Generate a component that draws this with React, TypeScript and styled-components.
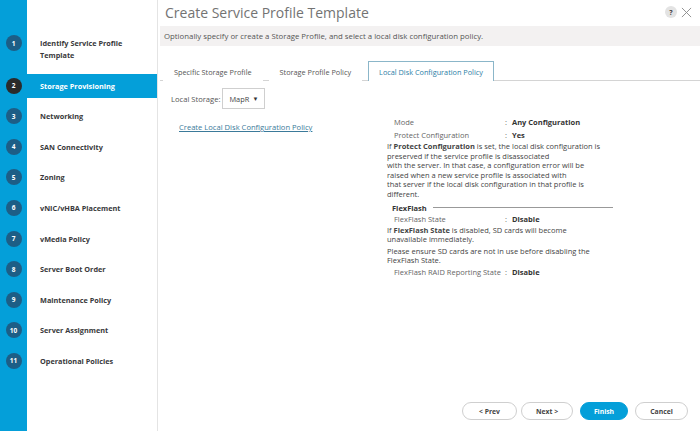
import React from 'react'
import styled, { createGlobalStyle } from 'styled-components'

const GlobalStyle = createGlobalStyle`
  html, body {
    margin: 0;
    padding: 0;
    background: #fff;
    font-family: 'Open Sans', 'Liberation Sans', sans-serif;
  }
  * { box-sizing: border-box; }
`

const CISCO_BLUE = '#049fd9'

const steps = [
  'Identify Service Profile Template',
  'Storage Provisioning',
  'Networking',
  'SAN Connectivity',
  'Zoning',
  'vNIC/vHBA Placement',
  'vMedia Policy',
  'Server Boot Order',
  'Maintenance Policy',
  'Server Assignment',
  'Operational Policies',
]

const Shell = styled.div`
  display: flex;
  width: 700px;
  height: 431px;
  overflow: hidden;
`

const Sidebar = styled.nav`
  width: 158px;
  flex-shrink: 0;
  background: linear-gradient(to right, ${CISCO_BLUE} 27px, #fff 27px);
  border-right: 1px solid #e4e4e4;
  padding-top: 31px;
  display: flex;
  flex-direction: column;
  gap: 6.6px;
`

const StepRow = styled.div<{ $active?: boolean }>`
  display: flex;
  align-items: flex-start;
  padding: 3.5px 0;
  background: ${(p) => (p.$active ? CISCO_BLUE : 'transparent')};
`

const StepRail = styled.div`
  width: 27px;
  flex-shrink: 0;
  display: flex;
  justify-content: center;
`

const StepBadge = styled.span<{ $active?: boolean }>`
  width: 16px;
  height: 16px;
  margin-top: 0.5px;
  border-radius: 50%;
  background: ${(p) => (p.$active ? '#2a2a2a' : '#1d5e86')};
  color: #fff;
  font-size: 6.5px;
  font-weight: 700;
  display: flex;
  align-items: center;
  justify-content: center;
`

const StepLabel = styled.span<{ $active?: boolean }>`
  margin-left: 13px;
  padding: 2.5px 0;
  width: 110px;
  font-size: 7.3px;
  line-height: 12px;
  font-weight: 700;
  color: ${(p) => (p.$active ? '#fff' : '#39393b')};
`

const Main = styled.main`
  flex: 1;
  display: flex;
  flex-direction: column;
  padding-left: 2px;
  min-width: 0;
`

const Header = styled.header`
  height: 24px;
  display: flex;
  align-items: center;
  padding: 0 8px 0 5px;
`

const Title = styled.h1`
  margin: 0;
  flex: 1;
  font-size: 14px;
  font-weight: 400;
  color: #737373;
`

const HelpIcon = styled.span`
  width: 12px;
  height: 12px;
  border-radius: 50%;
  background: #e3e3e3;
  color: #444;
  font-size: 7px;
  font-weight: 700;
  display: flex;
  align-items: center;
  justify-content: center;
  margin-right: 4px;
`

const CloseIcon = styled.svg`
  width: 11px;
  height: 11px;
`

const InfoBar = styled.div`
  height: 20px;
  margin-top: 2px;
  background: #f3f1f1;
  display: flex;
  align-items: center;
  padding-left: 4px;
  font-size: 7.8px;
  color: #555;
`

const TabBar = styled.div`
  margin-top: 15px;
  height: 20px;
  display: flex;
  align-items: stretch;
  gap: 6px;
  padding-left: 3px;
  border-bottom: 1px solid #d4d4d4;
`

const Tab = styled.div<{ $active?: boolean }>`
  display: flex;
  align-items: center;
  padding: 0 10px;
  font-size: 7.3px;
  color: ${(p) => (p.$active ? '#2c7ea6' : '#555')};
  border: 1px solid ${(p) => (p.$active ? '#8bb6c9' : 'transparent')};
  border-bottom: none;
  background: #fff;
  margin-bottom: -1px;
`

const FormRow = styled.div`
  display: flex;
  align-items: center;
  padding: 7px 0 0 11px;
  font-size: 7.6px;
  color: #555;
`

const Select = styled.div`
  margin-left: 2px;
  width: 43px;
  height: 21px;
  border: 1px solid #cfcfcf;
  display: flex;
  align-items: center;
  justify-content: space-between;
  padding: 0 6px;
  color: #444;
  font-size: 7.4px;
`

const Caret = styled.span`
  font-size: 6px;
  color: #333;
`

const Content = styled.div`
  display: grid;
  grid-template-columns: 208px 226px;
  padding: 6px 0 0 19px;
`

const LinkText = styled.a`
  margin-top: 7px;
  font-size: 7.6px;
  color: #3b7a9a;
  text-decoration: underline;
  align-self: start;
`

const Details = styled.div`
  display: flex;
  flex-direction: column;
  font-size: 7.5px;
  color: #444;
`

const PropRow = styled.div`
  display: grid;
  grid-template-columns: 111px 7px 1fr;
  padding-left: 7px;
  height: 13px;
  align-items: center;
  color: #666;
`

const PropValue = styled.span`
  font-weight: 700;
  color: #333;
`

const Note = styled.p<{ $gap?: number }>`
  margin: ${(p) => p.$gap ?? 0}px 0 0;
  line-height: 9.6px;
  color: #444;
`

const SectionHead = styled.div`
  display: flex;
  align-items: center;
  gap: 6px;
  margin-top: 3px;
  padding-left: 5px;
  height: 10px;
  font-weight: 700;
  color: #333;
  &::after {
    content: '';
    flex: 1;
    border-top: 1px solid #999;
  }
`

const Footer = styled.div`
  margin-top: auto;
  display: flex;
  justify-content: flex-end;
  gap: 4px;
  padding: 0 12px 11px 0;
`

const Button = styled.button<{ $primary?: boolean; $w: number }>`
  width: ${(p) => p.$w}px;
  height: 18px;
  border-radius: 9px;
  border: 1px solid ${(p) => (p.$primary ? CISCO_BLUE : '#cfcfcf')};
  background: ${(p) => (p.$primary ? CISCO_BLUE : '#fff')};
  color: ${(p) => (p.$primary ? '#fff' : '#444')};
  font-family: inherit;
  font-size: 6.8px;
  font-weight: 700;
  padding: 0;
  margin-left: ${(p) => (p.$primary ? 3 : 0)}px;
  margin-right: ${(p) => (p.$primary ? 3 : 0)}px;
`

export default function App() {
  return (
    <>
      <GlobalStyle />
      <Shell>
        <Sidebar>
          {steps.map((s, i) => (
            <StepRow key={s} $active={i === 1}>
              <StepRail>
                <StepBadge $active={i === 1}>{i + 1}</StepBadge>
              </StepRail>
              <StepLabel $active={i === 1}>{s}</StepLabel>
            </StepRow>
          ))}
        </Sidebar>
        <Main>
          <Header>
            <Title>Create Service Profile Template</Title>
            <HelpIcon>?</HelpIcon>
            <CloseIcon viewBox="0 0 12 12">
              <path d="M1 1 L11 11 M11 1 L1 11" stroke="#8a8a8a" strokeWidth="1" fill="none" />
            </CloseIcon>
          </Header>
          <InfoBar>
            Optionally specify or create a Storage Profile, and select a local disk configuration policy.
          </InfoBar>
          <TabBar>
            <Tab>Specific Storage Profile</Tab>
            <Tab>Storage Profile Policy</Tab>
            <Tab $active>Local Disk Configuration Policy</Tab>
          </TabBar>
          <FormRow>
            Local Storage:
            <Select>
              MapR <Caret>▼</Caret>
            </Select>
          </FormRow>
          <Content>
            <LinkText>Create Local Disk Configuration Policy</LinkText>
            <Details>
              <PropRow>
                <span>Mode</span>
                <span>:</span>
                <PropValue>Any Configuration</PropValue>
              </PropRow>
              <PropRow>
                <span>Protect Configuration</span>
                <span>:</span>
                <PropValue>Yes</PropValue>
              </PropRow>
              <Note $gap={1}>
                If <b>Protect Configuration</b> is set, the local disk configuration is
                <br />
                preserved if the service profile is disassociated
                <br />
                with the server. In that case, a configuration error will be
                <br />
                raised when a new service profile is associated with
                <br />
                that server if the local disk configuration in that profile is
                <br />
                different.
              </Note>
              <SectionHead>FlexFlash</SectionHead>
              <PropRow>
                <span>FlexFlash State</span>
                <span>:</span>
                <PropValue>Disable</PropValue>
              </PropRow>
              <Note>
                If <b>FlexFlash State</b> is disabled, SD cards will become
                <br />
                unavailable immediately.
              </Note>
              <Note $gap={2}>
                Please ensure SD cards are not in use before disabling the
                <br />
                FlexFlash State.
              </Note>
              <PropRow>
                <span>FlexFlash RAID Reporting State</span>
                <span>:</span>
                <PropValue>Disable</PropValue>
              </PropRow>
            </Details>
          </Content>
          <Footer>
            <Button $w={55}>&lt; Prev</Button>
            <Button $w={52}>Next &gt;</Button>
            <Button $w={48} $primary>
              Finish
            </Button>
            <Button $w={53}>Cancel</Button>
          </Footer>
        </Main>
      </Shell>
    </>
  )
}
